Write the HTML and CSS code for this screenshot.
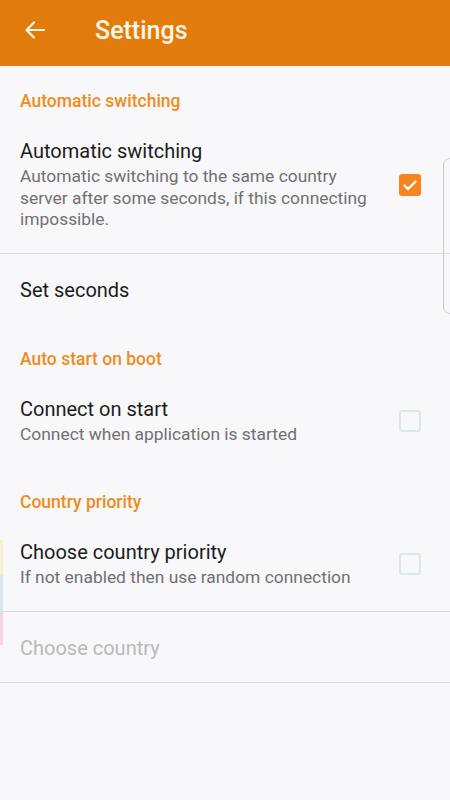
FILE: index.html
```html
<!DOCTYPE html>
<html lang="en">

<head>
    <meta charset="UTF-8">
    <meta name="viewport" content="width=device-width, initial-scale=1.0">
    <title>Settings</title>
    <link rel="stylesheet" href="styles.css">
</head>

<body>

    <!-- Toolbar -->
    <div class="toolbar">
        <svg class="back" width="24" height="24" viewBox="0 0 24 24">
            <path d="M21 12H3.5M11 4.5L3.5 12l7.5 7.5" fill="none" stroke="#fff6e6" stroke-width="2.2" stroke-linecap="round" stroke-linejoin="round" />
        </svg>
        <div class="title">Settings</div>
    </div>

    <div class="list">
        <div class="category">Automatic switching</div>
        <div class="pref">
            <div class="text">
                <div class="pref-title">Automatic switching</div>
                <div class="pref-summary">Automatic switching to the same country server after some seconds, if this connecting impossible.</div>
            </div>
            <div class="check checked">
                <svg width="22" height="22" viewBox="0 0 22 22">
                    <path d="M5.5 11.5l3.6 3.6 7.4-7.6" fill="none" stroke="#fff" stroke-width="2.2" stroke-linecap="round" stroke-linejoin="round" />
                </svg>
            </div>
        </div>
        <div class="divider"></div>
        <div class="pref single">
            <div class="pref-title">Set seconds</div>
        </div>

        <div class="category">Auto start on boot</div>
        <div class="pref">
            <div class="text">
                <div class="pref-title">Connect on start</div>
                <div class="pref-summary">Connect when application is started</div>
            </div>
            <div class="check"></div>
        </div>

        <div class="category">Country priority</div>
        <div class="pref">
            <div class="text">
                <div class="pref-title">Choose country priority</div>
                <div class="pref-summary">If not enabled then use random connection</div>
            </div>
            <div class="check"></div>
        </div>
        <div class="divider"></div>
        <div class="pref single disabled">
            <div class="pref-title">Choose country</div>
        </div>
        <div class="divider"></div>
    </div>

    <!-- edge handle and colour strip on the screen edges -->
    <div class="edge-handle"></div>
    <div class="edge-strip">
        <div class="strip yellow"></div>
        <div class="strip blue"></div>
        <div class="strip pink"></div>
    </div>

</body>

</html>
```

FILE: styles.css
```css
body {
    font-family: Roboto, 'Noto Sans', sans-serif;
    margin: 0;
    background: #f8f7f9;
    width: 450px;
    height: 800px;
    overflow: hidden;
    position: relative;
}

.toolbar {
    height: 66px;
    background: #e07b0c;
    display: flex;
    align-items: center;
    padding-left: 23px;
    box-sizing: border-box;
}

.back {
    display: block;
    margin-top: -7px;
}

.title {
    color: #fff6e6;
    font-size: 25px;
    font-weight: 500;
    margin-left: 48px;
    margin-top: -5px;
}

.category {
    padding: 25px 20px 0;
    line-height: 20px;
    font-size: 17.5px;
    font-weight: 500;
    color: #f08c1c;
}

.pref {
    display: flex;
    align-items: center;
    padding: 28px 29px 22px 20px;
}

.text {
    flex: 1;
    margin-right: 24px;
}

.pref-title {
    font-size: 20px;
    line-height: 24px;
    color: #1c1c1c;
}

.pref-summary {
    font-size: 17.4px;
    line-height: 21.5px;
    color: #717171;
    margin-top: 3px;
}

.pref.single {
    padding: 24px 20px 22px;
}

.disabled .pref-title {
    color: #b9b9bb;
}

.check {
    width: 18px;
    height: 18px;
    border: 2px solid #dde6ea;
    border-radius: 3px;
}

.check.checked {
    width: 22px;
    height: 22px;
    border: none;
    background: #f5861f;
}

.check svg {
    display: block;
}

.divider {
    height: 1px;
    background: #dcdcdc;
}

.edge-handle {
    position: absolute;
    left: 443px;
    top: 158px;
    width: 12px;
    height: 154px;
    border: 1px solid #c9c9cb;
    border-radius: 9px;
}

.edge-strip {
    position: absolute;
    left: 0;
    top: 540px;
    width: 3px;
}

.strip {
    height: 35px;
}

.yellow {
    background: #f3f1d2;
}

.blue {
    background: #d3ebf1;
}

.pink {
    background: #f6d6de;
}
```
